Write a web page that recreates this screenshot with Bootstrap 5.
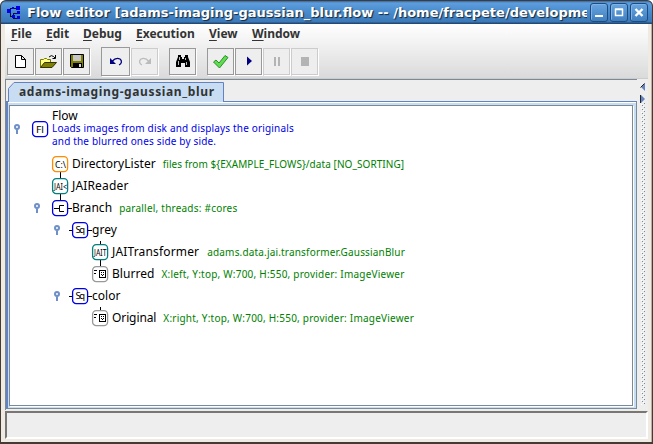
<!DOCTYPE html>
<html lang="en">
<head>
<meta charset="utf-8">
<title>Flow editor</title>
<link href="https://cdn.jsdelivr.net/npm/bootstrap@5.3.0/dist/css/bootstrap.min.css" rel="stylesheet">
<style>
body{width:653px;height:444px;overflow:hidden;background:#fff;font-family:"Noto Sans","Open Sans",sans-serif;font-size:12px;line-height:16px;color:#000}
.win{width:653px;height:444px;border:solid #453a36;border-width:1px 1px 2px 1px;border-radius:6px 6px 0 0;background:#1b2b40;overflow:hidden}
.titlebar{height:23px;flex:none;background:linear-gradient(#2f6aa6 0,#5e9edd 2px,#4a8cce 10px,#3c79b8 21px,#234a75 22px);padding:0 3px 0 6px}
.titlebar h1{font:bold 13px/23px "DejaVu Sans",sans-serif;color:#fff;text-shadow:1px 1px 1px #14253a;width:560px;margin:0 3px 0 6px}
.wbtns{gap:2px}
.wbtn{width:18px;height:19px;border:1px solid #1f4c7c;border-radius:3px;background:linear-gradient(#68a5e0,#3f7fc0);box-shadow:inset 1px 1px 0 #7db3e6}
.frame{background:#efebe3;padding:0 3px 3px 4px;border-right:1px solid #b8b0a4;min-height:0}
.top-area{height:55px;flex:none;background:linear-gradient(#fff,#dadada);border-bottom:1px solid #ccc}
.menus{height:21px;font-weight:bold;color:#333;padding-left:6px}
.menus a{color:#333;text-decoration:none;display:block;line-height:20px;white-space:nowrap}
.menus u{text-underline-offset:2px}
.m1{width:35px}.m2{width:37px}.m3{width:53px}.m4{width:73px}.m5{width:43px}.m6{width:60px}
.tools{padding:1px 0 0 2px;height:31px}
.tbtn{width:27px;height:27px;border:1px solid #999;background:#eee;box-shadow:1px 1px 0 #fff;padding:0;border-radius:0;margin-right:1px}
.tbtn.big{width:29px;height:29px}
.tbtn.off{border-color:#ccc}
.gap-l{margin-left:10px}
.main{height:331px;flex:none;background:#eee}
.tabs{width:632px;border-top:1px solid #7a8a99;border-left:1px solid #7a8a99}
.tabhead{height:21px;padding:2px 0 0 2px}
.tabhead svg{display:block}
.tabpage{height:308px;border:1px solid #7a8a99;border-left:2px solid #6382bf;border-top:1px solid #6382bf;background:#c8ddf2;padding:3px 3px 2px 1px;box-shadow:inset 0 1px 0 #fff}
.tree{height:100%;background:#fff;border:1px solid #7a8a99;box-shadow:1px 1px 0 #fff;padding-top:5px}
.split{width:11px;padding:4px 0 3px 3px}
.status{height:28px;margin-top:1px;background:#eee;border:2px solid;border-color:#777 #fff #fff #777}
.node{height:22px;white-space:nowrap}
.node svg,.root svg{overflow:visible;flex:none}
.root{height:42px}
.root-text{margin-top:-7px}
.root svg{margin-top:-6px}
.i0{padding-left:3px}.i1{padding-left:23px}.i2{padding-left:43px}
.n1{padding-left:42px}.n2{padding-left:82px}
.handle{width:10px;height:11px;margin-right:9px}
.ico{width:17px;height:17px;margin-right:3px}
.ico text{font-family:"Noto Sans",sans-serif;font-size:9.5px;stroke:none;fill:#000}
.nm{letter-spacing:.05px}
.nm.wide{letter-spacing:.16px}
.nm.tight{letter-spacing:-.1px}
.info{color:#008000;font-size:10px;margin-left:7px;letter-spacing:.22px}
.info.near{letter-spacing:.07px}
.info.mid{letter-spacing:.17px;margin-left:8px}
.info.far{margin-left:8px}
.desc{color:#0000e8;font-size:10px;line-height:13px;letter-spacing:.17px}
.rt{line-height:13px}
</style>
</head>
<body>
<svg width="0" height="0" class="position-absolute"><defs>
<g id="hd"><circle cx="4" cy="3" r="2" fill="#fff" stroke="#6f8fc9" stroke-width="2"/><path d="M4 5.5V10" stroke="#6f8fc9" stroke-width="2"/></g>
<rect id="bx" x=".6" y=".6" width="15" height="15" rx="3.600" fill="#fff" stroke="currentColor" stroke-width="1.300"/>
<g id="disp" shape-rendering="crispEdges"><path d="M2 4.5h3M2 7.500h2M7.5 4.5h6v7h-6z" fill="none" stroke="#000"/><path d="M9 6h1v1H9zM11 6h1v1h-1zM9 8h1v1H9zM10 9h1v1H10zM11 8h1v1h-1z" fill="#000"/></g>
<pattern id="bump" width="4" height="4" patternUnits="userSpaceOnUse"><path d="M0 0h1v1H0zM2 2h1v1H2z" fill="#7a8a99"/><path d="M1 1h1v1H1zM3 3h1v1H3z" fill="#fff"/></pattern>
</defs></svg>
<div class="win d-flex flex-column">
 <div class="titlebar d-flex align-items-center">
  <svg width="14" height="14" viewBox="0 0 14 14" shape-rendering="crispEdges"><path d="M3 6V2h7M3 6v4h3M6 7h7M6 7v5h5" fill="none" stroke="#001030"/><path d="M0 3h4v4H0zM5 1h2v2H5zM9 0h4v4H9zM10 5h3v3h-3zM5 9h3v3H5zM10 10h3v3h-3z" fill="#0000e8"/></svg>
  <h1 class="overflow-hidden text-nowrap">Flow editor [adams-imaging-gaussian_blur.flow -- /home/fracpete/developme</h1>
  <div class="d-flex wbtns">
   <div class="wbtn"><svg width="16" height="17" class="d-block"><path d="M4 12h8" stroke="#fff" stroke-width="2"/></svg></div>
   <div class="wbtn"><svg width="16" height="17" class="d-block"><path d="M4.500 5.500h7v6h-7zM4 5h8" fill="none" stroke="#fff" stroke-width="1.500"/></svg></div>
   <div class="wbtn"><svg width="16" height="17" class="d-block"><path d="M4.500 5l7 7M11.500 5l-7 7" stroke="#fff" stroke-width="2.400"/></svg></div>
  </div>
 </div>
 <div class="frame d-flex flex-column flex-fill">
  <div class="top-area">
   <nav class="menus d-flex">
    <a class="m1"><u>F</u>ile</a><a class="m2"><u>E</u>dit</a><a class="m3"><u>D</u>ebug</a><a class="m4"><u>E</u>xecution</a><a class="m5"><u>V</u>iew</a><a class="m6"><u>W</u>indow</a>
   </nav>
   <div class="tools d-flex align-items-center">
    <button class="tbtn d-flex align-items-center justify-content-center"><svg width="17" height="17"><path d="M3.500 2.500h6l4 4v8h-10zM9.500 2.500v4h4" fill="#fff" stroke="#000"/></svg></button>
    <button class="tbtn d-flex align-items-center justify-content-center"><svg width="17" height="17"><path d="M.5 14.500V6.500h3l1-1h2l1 1h3v3" fill="#ffff80" stroke="#777700"/><path d="M.5 14.500l4-5h12l-4.500 5z" fill="#808000" stroke="#333300"/><path d="M9 4q2.500-2.500 4.500-.5l1.500 1.500M15.500 2v3.500h-3" fill="none" stroke="#000"/></svg></button>
    <button class="tbtn d-flex align-items-center justify-content-center"><svg width="16" height="16"><path d="M1.500 1.500h13v13h-12l-1-1z" fill="#808000" stroke="#000"/><path d="M4 2h8v6H4z" fill="#c6c6c6"/><path d="M4 10h9v4H4z" fill="#000"/><path d="M10 11h2v3h-2z" fill="#ddd"/></svg></button>
    <button class="tbtn big gap-l d-flex align-items-center justify-content-center"><svg width="16" height="16"><path d="M4 8.500C7 5 10 5 12 6c2.500 2 1.500 5-1 6" fill="none" stroke="#000080" stroke-width="1.300"/><path d="M2 5v6h6z" fill="#000080"/></svg></button>
    <button class="tbtn off d-flex align-items-center justify-content-center"><svg width="16" height="16"><path d="M12 8.500C9 5 6 5 4 6c-2.500 2-1.500 5 1 6" fill="none" stroke="#bbb" stroke-width="1.300"/><path d="M14 5v6H8z" fill="#bbb"/></svg></button>
    <button class="tbtn gap-l d-flex align-items-center justify-content-center"><svg width="16" height="16"><path d="M3 2h3v2h1v2h2V4h1V2h3v2l2 5v5h-5v-4H6v4H1V9l2-5z" fill="#000"/><path d="M4.500 4v3M3.500 8v4M10.500 5v2M11.500 9v3" stroke="#eee" stroke-width=".8"/></svg></button>
    <button class="tbtn gap-l d-flex align-items-center justify-content-center"><svg width="18" height="16"><path d="M1.500 9L4 7l3 3 6-7.500 3 2-8.500 10.500z" fill="#5fdc50" stroke="#2c9028"/></svg></button>
    <button class="tbtn d-flex align-items-center justify-content-center"><svg width="16" height="16"><path d="M6 3.500l5 4.500-5 4.500z" fill="#000080"/></svg></button>
    <button class="tbtn off d-flex align-items-center justify-content-center"><svg width="16" height="16"><path d="M5 4h2v9H5zM9 4h2v9H9z" fill="#b4b4b4"/></svg></button>
    <button class="tbtn off d-flex align-items-center justify-content-center"><svg width="16" height="16"><path d="M4 4h8v9H4z" fill="#b4b4b4"/></svg></button>
   </div>
  </div>
  <div class="main d-flex">
   <div class="tabs">
    <div class="tabhead"><svg width="217" height="20"><path d="M0 20V7l6-6h209v19z" fill="#c8ddf2"/><path d="M.5 20V6.500L6 .5h209.500V20" fill="none" stroke="#6382bf"/><text x="11" y="14" font-weight="bold" font-size="12" fill="#333" textLength="195">adams-imaging-gaussian_blur</text></svg></div>
    <div class="tabpage"><div class="tree">
     <div class="root i0 d-flex align-items-center"><svg class="handle"><use href="#hd"/></svg>
      <svg class="ico" color="#0000e8"><use href="#bx"/><text x="4" y="12" textLength="8" lengthAdjust="spacingAndGlyphs">Fl</text></svg>
      <div class="root-text"><div class="rt">Flow</div><div class="desc">Loads images from disk and displays the originals<br>and the blurred ones side by side.</div></div></div>
     <div class="node n1 d-flex align-items-center"><svg class="ico" color="#ff8c00"><path d="M8.500 16v6" stroke="#000"/><use href="#bx"/><text x="3" y="11.500" textLength="11" lengthAdjust="spacingAndGlyphs">C:\</text></svg><span class="nm">DirectoryLister</span><span class="info near">files from ${EXAMPLE_FLOWS}/data [NO_SORTING]</span></div>
     <div class="node n1 d-flex align-items-center"><svg class="ico" color="#008080"><path d="M8.500 16v6" stroke="#000"/><use href="#bx"/><text x="2" y="11.500" textLength="13" lengthAdjust="spacingAndGlyphs">JAI&lt;</text></svg><span class="nm wide">JAIReader</span></div>
     <div class="node i1 d-flex align-items-center"><svg class="handle"><use href="#hd"/></svg><svg class="ico" color="#0000e8"><use href="#bx"/><path d="M2 8.500h5M12 5.500H7.500v6H12M16 8.500h4" fill="none" stroke="#000"/></svg><span class="nm">Branch</span><span class="info">parallel, threads: #cores</span></div>
     <div class="node i2 d-flex align-items-center"><svg class="handle"><use href="#hd"/></svg><svg class="ico" color="#0000e8"><path d="M-3 8.500h3M16 8.500h4" stroke="#000"/><use href="#bx"/><text x="3.500" y="11" textLength="9.500">Sq</text></svg><span class="nm">grey</span></div>
     <div class="node n2 d-flex align-items-center"><svg class="ico" color="#008080"><path d="M8.500 -3v3M8.500 16v6" stroke="#000"/><use href="#bx"/><text x="2" y="11.500" textLength="12.500" lengthAdjust="spacingAndGlyphs">JAIT</text></svg><span class="nm wide">JAITransformer</span><span class="info mid">adams.data.jai.transformer.GaussianBlur</span></div>
     <div class="node n2 d-flex align-items-center"><svg class="ico" color="#999"><use href="#bx"/><use href="#disp"/></svg><span class="nm">Blurred</span><span class="info">X:left, Y:top, W:700, H:550, provider: ImageViewer</span></div>
     <div class="node i2 d-flex align-items-center"><svg class="handle"><use href="#hd"/></svg><svg class="ico" color="#0000e8"><path d="M-3 8.500h3M16 8.500h4" stroke="#000"/><use href="#bx"/><text x="3.500" y="11" textLength="9.500">Sq</text></svg><span class="nm">color</span></div>
     <div class="node n2 d-flex align-items-center"><svg class="ico" color="#999"><path d="M8.500 -3v3" stroke="#000"/><use href="#bx"/><use href="#disp"/></svg><span class="nm tight">Original</span><span class="info">X:right, Y:top, W:700, H:550, provider: ImageViewer</span></div>
    </div></div>
   </div>
   <div class="split d-flex flex-column"><svg width="8" height="324"><path d="M1 4l4-4v8z" fill="#6382bf"/><path d="M.5 4.500l4-4" stroke="#222"/><path d="M1 12l4 4-4 4z" fill="#6382bf"/><path d="M.5 12v8" stroke="#222"/><rect x="1" y="20" width="4" height="302" fill="url(#bump)"/></svg></div>
  </div>
  <div class="status"></div>
 </div>
</div>
<script src="https://cdn.jsdelivr.net/npm/bootstrap@5.3.0/dist/js/bootstrap.bundle.min.js"></script>
</body>
</html>
